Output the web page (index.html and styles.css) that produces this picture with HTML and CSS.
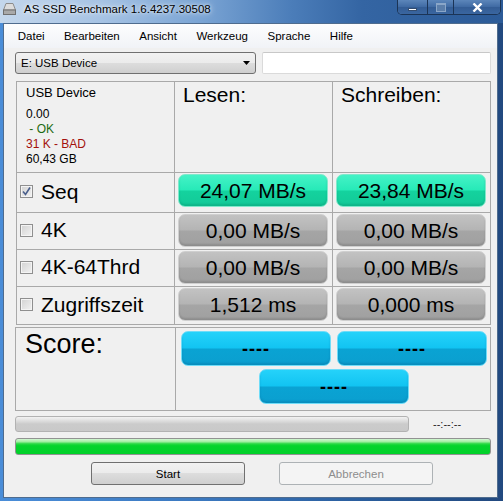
FILE: index.html
```html
<!DOCTYPE html>
<html>
<head lang="de">
    <meta charset="UTF-8">
    <title>AS SSD Benchmark</title>
    <link rel="stylesheet" href="styles.css">
</head>
<body>
<div id="window">
    <div id="titlebar">
        <svg class="app-icon" width="13" height="12" viewBox="0 0 13 12">
            <path d="M3 0.5h7l2.5 6.5h-12z" fill="#dcdcdc" stroke="#8c8c8c"/>
            <rect x="0.5" y="7" width="12" height="4.5" fill="#a9a9a9" stroke="#707070"/>
        </svg>
        <span class="title">AS SSD Benchmark 1.6.4237.30508</span>
        <div id="caption">
            <span class="cap-btn min"><i></i></span>
            <span class="cap-btn max"><i></i></span>
            <span class="cap-btn close">
                <svg width="11" height="9" viewBox="0 0 11 9"><path d="M1.5 0.5l8 8M9.5 0.5l-8 8" stroke="#fff" stroke-width="2.4"/></svg>
            </span>
        </div>
    </div>
    <div id="client">
        <ul id="menu">
            <li>Datei</li>
            <li>Bearbeiten</li>
            <li>Ansicht</li>
            <li>Werkzeug</li>
            <li>Sprache</li>
            <li>Hilfe</li>
        </ul>
        <div id="toolbar">
            <div class="combo">
                <span>E: USB Device</span>
                <svg width="7" height="4" viewBox="0 0 7 4"><path d="M0 0h7l-3.5 4z" fill="#000"/></svg>
            </div>
            <div class="textbox"></div>
        </div>
        <div id="results">
            <div class="info">
                <div class="dev">USB Device</div>
                <div class="line">0.00</div>
                <div class="line ok">&nbsp;- OK</div>
                <div class="line bad">31 K - BAD</div>
                <div class="line">60,43 GB</div>
            </div>
            <div class="head">Lesen:</div>
            <div class="head">Schreiben:</div>

            <div class="label"><span class="check on"><svg width="9" height="9" viewBox="0 0 9 9"><path d="M1 4.5l2.5 3 4.5-7" fill="none" stroke="#4a5f8c" stroke-width="1.6"/></svg></span>Seq</div>
            <div class="cell"><div class="val green">24,07 MB/s</div></div>
            <div class="cell"><div class="val green">23,84 MB/s</div></div>

            <div class="label"><span class="check"></span>4K</div>
            <div class="cell"><div class="val grey">0,00 MB/s</div></div>
            <div class="cell"><div class="val grey">0,00 MB/s</div></div>

            <div class="label"><span class="check"></span>4K-64Thrd</div>
            <div class="cell"><div class="val grey">0,00 MB/s</div></div>
            <div class="cell"><div class="val grey">0,00 MB/s</div></div>

            <div class="label"><span class="check"></span>Zugriffszeit</div>
            <div class="cell"><div class="val grey">1,512 ms</div></div>
            <div class="cell"><div class="val grey">0,000 ms</div></div>
        </div>
        <div id="score">
            <div class="score-label">Score:</div>
            <div class="score-vals">
                <div class="val blue">----</div>
                <div class="val blue">----</div>
                <div class="val blue total">----</div>
            </div>
        </div>
        <div class="progress-row">
            <div class="bar grey"></div>
            <span class="time">--:--:--</span>
        </div>
        <div class="bar green"></div>
        <div class="buttons">
            <button class="btn">Start</button>
            <button class="btn" disabled>Abbrechen</button>
        </div>
    </div>
</div>
</body>
</html>
```

FILE: styles.css
```css
* {
    margin: 0;
    padding: 0;
    box-sizing: border-box;
}

ol, ul {
    list-style: none;
}

body {
    font-family: "Liberation Sans", Arial, sans-serif;
    background: #fff;
}

#window {
    width: 503px;
    height: 501px;
    padding: 0 5px 3px 3px;
    display: flex;
    flex-direction: column;
    background: linear-gradient(90deg, #4a8dd8 0%, #3b78bf 40%, #2b5f9f 70%, #22497f 100%);
}

#titlebar {
    height: 23px;
    margin: 0 -5px 0 -3px;
    padding: 3px 0 0 3px;
    display: flex;
    align-items: flex-start;
    background: linear-gradient(90deg, #c4d7ec 0%, #a6c3e4 20%, #7aa4d4 40%, #4b7db9 58%, #3465a3 72%, #2c5b98 100%);
}

.app-icon {
    display: block;
}

.title {
    margin-left: 8px;
    font-size: 11.5px;
    line-height: 13px;
    color: #000;
    text-shadow: 0 0 6px rgba(255, 255, 255, .9), 0 0 3px rgba(255, 255, 255, .7);
}

#caption {
    display: flex;
    margin: -3px 2px 0 auto;
    height: 15px;
    border: 1px solid #1b3456;
    border-top: none;
    border-radius: 0 0 5px 5px;
    overflow: hidden;
    box-shadow: inset 0 0 0 1px rgba(255, 255, 255, .25);
}

.cap-btn {
    display: flex;
    align-items: center;
    justify-content: center;
    height: 14px;
    background: linear-gradient(#5c86ba, #3f6aa3 50%, #335c94 50%, #3a66a0);
}

.cap-btn + .cap-btn {
    border-left: 1px solid #1b3456;
}

.min {
    width: 29px;
}

.min i {
    display: block;
    width: 9px;
    height: 3px;
    margin-top: 5px;
    background: #fff;
    border: 1px solid #344d70;
}

.max {
    width: 26px;
}

.max i {
    display: block;
    width: 10px;
    height: 9px;
    border: 1px solid #8aa6c8;
    border-top-width: 2px;
    background: #5b7eaa;
}

.close {
    width: 47px;
}

#client {
    flex: 1;
    display: flex;
    flex-direction: column;
    border: 1px solid #4f6c8e;
    background: #f0f0f0;
}

#menu {
    display: flex;
    height: 24px;
    align-items: center;
    padding-left: 4px;
    font-size: 11.5px;
    background: linear-gradient(#fdfdfe, #f1f3f7);
}

#menu li {
    padding: 0 9.75px;
}

#toolbar {
    display: flex;
    gap: 6px;
    height: 22px;
    margin-top: 4px;
    padding-left: 11px;
}

.combo {
    width: 241px;
    display: flex;
    align-items: center;
    justify-content: space-between;
    padding: 0 5px 0 5px;
    font-size: 11.5px;
    border: 1px solid #707070;
    border-radius: 3px;
    background: linear-gradient(#f2f2f2, #ebebeb 50%, #dddddd 50%, #cfcfcf);
}

.textbox {
    width: 229px;
    background: #fff;
    border: 1px solid #dadada;
    border-top-color: #c8c8c8;
    border-radius: 2px;
}

#results {
    display: grid;
    grid-template-columns: 157px 157px 157px;
    grid-template-rows: 90px 39px 36px 36px 37px;
    gap: 1px;
    padding: 1px;
    width: 475px;
    margin: 7px 0 0 12px;
    background: #a9a9a9;
}

#results > div {
    background: #f0f0f0;
}

.info {
    padding: 3px 0 0 9px;
    color: #000;
}

.dev {
    font-size: 13px;
    line-height: 15px;
    margin-bottom: 7px;
}

.line {
    font-size: 12px;
    line-height: 15px;
}

.ok {
    color: #1d6b12;
}

.bad {
    color: #a3100c;
}

.head {
    padding: 1px 0 0 8px;
    font-size: 21px;
}

.label {
    display: flex;
    align-items: center;
    gap: 8px;
    padding: 0 0 2px 3px;
    font-size: 21px;
}

.check {
    width: 13px;
    height: 13px;
    display: flex;
    align-items: center;
    justify-content: center;
    border: 1px solid #8f8f8f;
    background: linear-gradient(135deg, #d2d2d2, #f2f2f2);
    box-shadow: inset 0 0 0 1px #f4f4f4;
}

.cell {
    padding: 1px 4px 0 3px;
}

.val {
    height: 33px;
    display: flex;
    align-items: center;
    justify-content: center;
    font-size: 21px;
    color: #000;
    border-radius: 7px;
}

.green {
    border: 1px solid #7fe9cb;
    background: linear-gradient(#44f2c6 0%, #27eab8 48%, #14d29e 52%, #12ca98 100%);
    box-shadow: inset 0 -2px 2px rgba(0, 120, 90, .25);
}

.grey {
    border: 1px solid #cfcfcf;
    background: linear-gradient(#c2c2c2 0%, #b4b4b4 48%, #a5a5a5 52%, #a0a0a0 100%);
    box-shadow: inset 0 -2px 2px rgba(0, 0, 0, .12);
}

#score {
    display: grid;
    grid-template-columns: 159px 314px;
    gap: 1px;
    padding: 1px;
    width: 476px;
    height: 84px;
    margin: 2px 0 0 11px;
    background: #a9a9a9;
}

#score > div {
    background: #f0f0f0;
}

.score-label {
    padding: 1px 0 0 9px;
    font-size: 27px;
}

.score-vals {
    display: flex;
    flex-wrap: wrap;
    align-content: flex-start;
    gap: 3px 6px;
    padding: 3px 3px 0 5px;
}

.blue {
    width: 150px;
    height: 35px;
    padding-top: 2px;
    font-size: 18px;
    font-weight: bold;
    letter-spacing: 1px;
    border: 1px solid #6fdcf8;
    background: linear-gradient(#25d2fa 0%, #12c4f2 48%, #0aa3d3 52%, #0b9fcf 100%);
    box-shadow: inset 0 -2px 2px rgba(0, 70, 120, .2);
}

.blue.total {
    margin: 0 auto;
}

.progress-row {
    display: flex;
    align-items: center;
    height: 16px;
    margin: 5px 0 0 11px;
}

.bar {
    border-radius: 3px;
}

.bar.grey {
    width: 394px;
    height: 16px;
    border: 1px solid #b2b2b2;
    background: linear-gradient(#f2f2f2 0%, #dcdcdc 30%, #cbcbcb 50%, #c9c9c9 100%);
    box-shadow: none;
}

.time {
    margin-left: 24px;
    font-size: 11px;
    color: #222;
}

.bar.green {
    width: 476px;
    height: 17px;
    margin: 6px 0 0 11px;
    border: 1px solid #929292;
    background: linear-gradient(#d3f7d3 0%, #a2eea2 18%, #2ad944 32%, #05d42c 45%, #01d12a 100%);
    box-shadow: none;
}

.buttons {
    display: flex;
    gap: 34px;
    margin: 7px 0 0 87px;
}

.btn {
    width: 154px;
    height: 23px;
    font-family: "Liberation Sans", Arial, sans-serif;
    font-size: 11.5px;
    color: #000;
    border: 1px solid #707070;
    border-radius: 3px;
    background: linear-gradient(#f2f2f2, #ebebeb 50%, #dddddd 50%, #cfcfcf);
}

.btn:disabled {
    color: #8d8d8d;
    border-color: #adb2b5;
    background: #f4f4f4;
}
```
